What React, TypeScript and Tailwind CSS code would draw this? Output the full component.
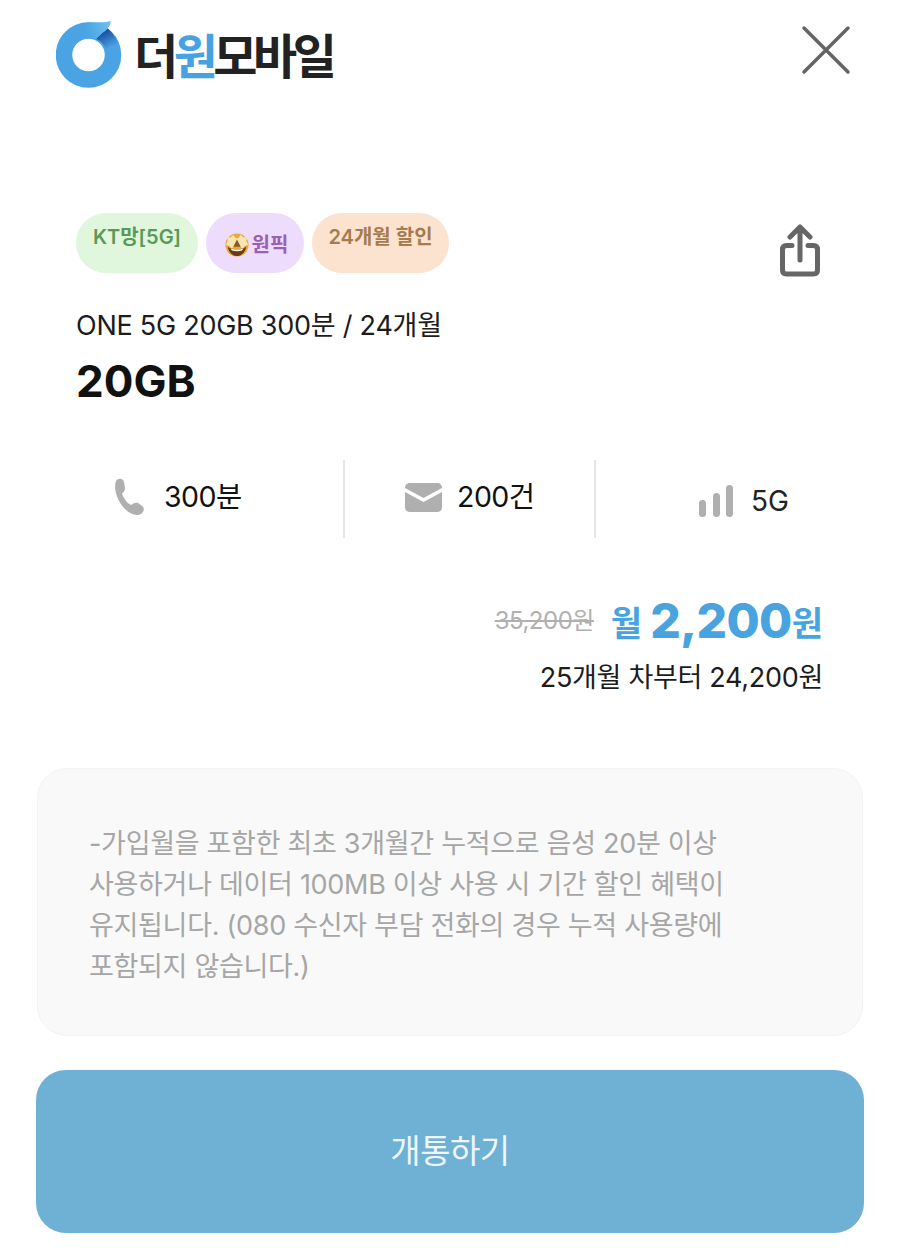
const font = "font-['Inter','Noto_Sans_CJK_KR',sans-serif]";

function Logo() {
  return (
    <svg width="66" height="68" viewBox="0 0 66 68" className="shrink-0">
      <defs>
        <linearGradient id="fold" x1="50" y1="6" x2="60" y2="24" gradientUnits="userSpaceOnUse">
          <stop offset="0" stopColor="#123f96" />
          <stop offset="1" stopColor="#4aa3e3" />
        </linearGradient>
        <linearGradient id="tip" x1="30" y1="10" x2="55" y2="2" gradientUnits="userSpaceOnUse">
          <stop offset="0" stopColor="#4aa3e3" />
          <stop offset="1" stopColor="#6cc3ee" />
        </linearGradient>
      </defs>
      <circle cx="32.5" cy="34" r="24.5" fill="none" stroke="#4aa3e3" strokeWidth="16.5" />
      <path d="M40 18 C44 14 48 11 51 7 C56 11 60 16 62 23 L50 28 C48 23 45 20 40 18 Z" fill="url(#fold)" />
      <path d="M30 1.5 C40 1 49 2 55 0 C54 6 50 10 46 12 C44 14 42 16 40 18 C37 17 34 17 32 17 Z" fill="url(#tip)" />
    </svg>
  );
}

function StarFace() {
  return (
    <svg width="24" height="24" viewBox="0 0 26 26" className="shrink-0">
      <circle cx="13" cy="13" r="12.5" fill="#e9a93a" />
      <path d="M1 13 L3 8 L2 4 L6 5 L9 2 L11 5 L13 6 L15 5 L17 2 L20 5 L24 4 L23 8 L25 13 L21 14 L19 17 L16 14 L13 13 L10 14 L7 17 L5 14 Z" fill="#f6e6b4" />
      <path d="M13 7 L17 15 H9 Z" fill="#8a5a1e" />
      <path d="M3 15 C8 19 18 19 23 15 C22 21 18 25 13 25 C8 25 4 21 3 15 Z" fill="#6d3c14" />
      <path d="M6 16.8 C10 18.4 16 18.4 20 16.8 L18.5 19 C15 20 11 20 7.5 19 Z" fill="#ffffff" />
    </svg>
  );
}

export default function App() {
  return (
    <div className={`${font} w-[900px] h-[1250px] bg-white overflow-hidden flex flex-col`}>
      <header className="flex items-center justify-between pl-[56px] pr-[48px] pt-[19px] h-[90px]">
        <div className="flex items-center gap-[12px]">
          <Logo />
          <span className="text-[48px] leading-none font-bold tracking-[-4.5px] text-[#222222] font-['Noto_Sans_CJK_KR',sans-serif] -mt-[4px]">
            더<span className="text-[#46a2e2]">원</span>모바일
          </span>
        </div>
        <svg width="52" height="52" viewBox="0 0 52 52" className="-mt-[9px]">
          <path d="M4 4 L48 48 M48 4 L4 48" stroke="#646464" strokeWidth="3.5" strokeLinecap="round" />
        </svg>
      </header>

      <section className="pl-[76px] pr-[76px] pt-[123px]">
        <div className="flex items-start justify-between">
          <div className="flex gap-[8px] h-[60px]">
            <span className="w-[122px] h-[60px] rounded-full bg-[#e0f6dd] text-[#5a9a58] text-[20px] font-semibold flex justify-center pt-[10px] leading-[28px]">KT망[5G]</span>
            <span className="w-[98px] h-[60px] rounded-full bg-[#eedcfd] text-[#9b5fb5] text-[20px] font-semibold flex items-center justify-center gap-[3px] pt-[3px] pl-[3px]">
              <StarFace />원픽
            </span>
            <span className="w-[137px] h-[60px] rounded-full bg-[#fbe3cf] text-[#a57c4e] text-[20px] font-semibold flex justify-center pt-[10px] leading-[28px]">24개월 할인</span>
          </div>
          <svg width="44" height="56" viewBox="0 0 44 56" className="mr-[2px] mt-[11px]">
            <path d="M14 21.5 H8.5 Q4.5 21.5 4.5 25.5 V46 Q4.5 50 8.5 50 H35.5 Q39.5 50 39.5 46 V25.5 Q39.5 21.5 35.5 21.5 H30" fill="none" stroke="#666666" strokeWidth="5" strokeLinecap="round" strokeLinejoin="round" />
            <path d="M22 36 V4 M12 13 L22 3 L32 13" fill="none" stroke="#666666" strokeWidth="5" strokeLinecap="round" strokeLinejoin="round" />
          </svg>
        </div>
        <p className="mt-[28px] text-[27px] leading-[36px] text-[#1c1c1c] tracking-[-0.25px]">ONE 5G 20GB 300분 / 24개월</p>
        <p className="mt-[9px] text-[44px] leading-[56px] font-bold text-[#111111]">20GB</p>
      </section>

      <section className="flex h-[78px] mt-[51px] items-stretch">
        <div className="w-[345px] border-r-2 border-[#e6e6e6] flex items-center pl-[113px] gap-[18px] pb-[4px]">
          <svg width="33" height="38" viewBox="0 0 33 38">
            <path d="M3 3 C5 0 10 0 11 4 L12 10 C12 13 10 14 9 16 C11 21 14 25 18 27 C20 26 22 24 25 25 L29 28 C32 30 31 34 28 36 C24 38 18 37 12 31 C5 24 0 12 3 3 Z" fill="#afafaf" />
          </svg>
          <span className="text-[28.5px] text-[#111111] tracking-[-0.5px]">300분</span>
        </div>
        <div className="w-[251px] border-r-2 border-[#e6e6e6] flex items-center pl-[60px] gap-[15px] pb-[4px]">
          <svg width="37" height="29" viewBox="0 0 37 29">
            <path d="M0 5 C0 2 2 0 5 0 H32 C35 0 37 2 37 5 L18.5 15 Z" fill="#afafaf" />
            <path d="M0 9 L18.5 19 L37 9 V24 C37 27 35 29 32 29 H5 C2 29 0 27 0 24 Z" fill="#afafaf" />
          </svg>
          <span className="text-[28.5px] text-[#111111] tracking-[-0.5px]">200건</span>
        </div>
        <div className="flex-1 flex items-center pl-[102px] gap-[17px] pt-[4px]">
          <svg width="36" height="32" viewBox="0 0 36 32">
            <rect x="1" y="15" width="7" height="17" rx="3.5" fill="#afafaf" />
            <rect x="15" y="8" width="7" height="24" rx="3.5" fill="#afafaf" />
            <rect x="28" y="0" width="7" height="32" rx="3.5" fill="#afafaf" />
          </svg>
          <span className="text-[28px] text-[#222222]">5G</span>
        </div>
      </section>

      <section className="flex flex-col items-end pr-[77px] mt-[54px]">
        <div className="flex items-center h-[60px]">
          <span className="text-[24px] text-[#b0b0b0] line-through mr-[17px] tracking-[-0.5px] mt-[-3px]">35,200원</span>
          <span className="text-[34px] font-bold text-[#48a3de] mr-[8px] mt-[2px]">월</span>
          <span className="text-[48px] font-extrabold text-[#48a3de] leading-none tracking-[-0.6px] mt-[-2px]">2,200</span>
          <span className="text-[34px] font-bold text-[#48a3de] mt-[2px]">원</span>
        </div>
        <p className="text-[27px] leading-[36px] text-[#1c1c1c] tracking-[-0.3px] mt-[8px]">25개월 차부터 24,200원</p>
      </section>

      <section className="mx-[37px] mt-[72px] h-[268px] rounded-[30px] bg-[#f9f9f9] border border-[#f3f3f3] px-[51px] pt-[54px]">
        <p className="text-[27px] leading-[41px] text-[#a6a6a6] tracking-[-0.3px] whitespace-pre-line">
          {"-가입월을 포함한 최초 3개월간 누적으로 음성 20분 이상\n사용하거나 데이터 100MB 이상 사용 시 기간 할인 혜택이\n유지됩니다. (080 수신자 부담 전화의 경우 누적 사용량에\n포함되지 않습니다.)"}
        </p>
      </section>

      <button className="mx-[36px] mt-[34px] h-[163px] rounded-[30px] bg-[#6eb1d4] text-[#eef6fa] text-[33px] tracking-[-0.5px]">
        개통하기
      </button>
    </div>
  );
}
